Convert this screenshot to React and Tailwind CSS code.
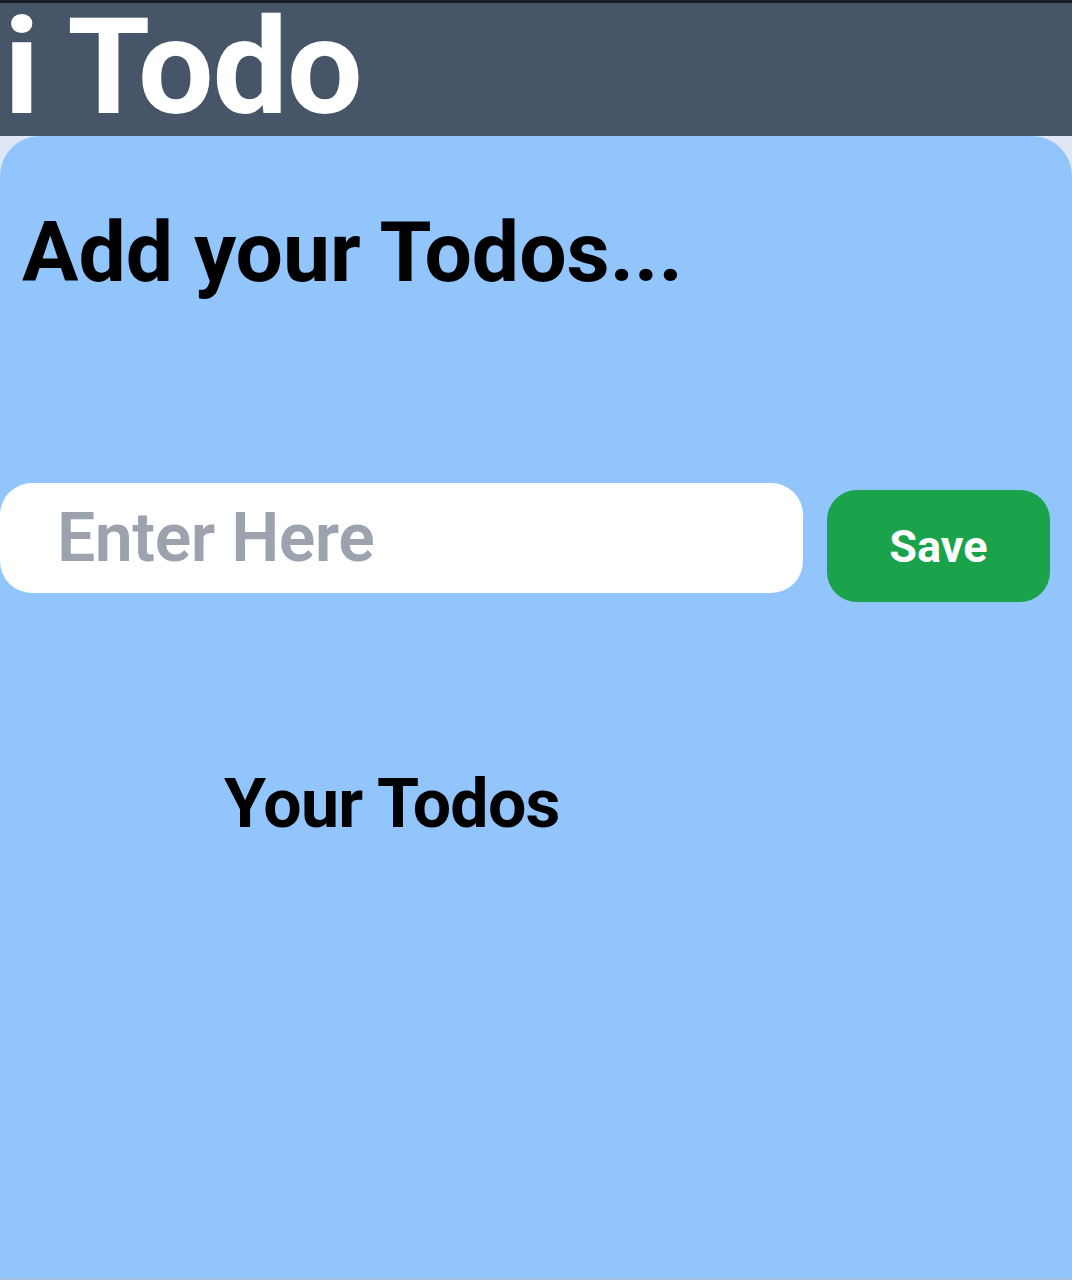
export default function App() {
  return (
    <div
      className="min-h-[1280px] w-[1072px] bg-[#dfe7f7] flex flex-col"
      style={{ fontFamily: "Roboto, 'Liberation Sans', sans-serif" }}
    >
      <nav className="h-[136px] bg-[#475569] border-t-[3px] border-[#1c1f26] flex items-start">
        <div className="text-white font-bold text-[134px] leading-[130px] pl-[4px] tracking-[-1px] whitespace-nowrap">
          i Todo
        </div>
      </nav>
      <main className="flex-1 bg-[#93c5fd] rounded-t-[40px] border-b-[2px] border-[#a3bfdc]">
        <h1 className="text-black font-bold text-[84px] leading-none pl-[22px] pt-[75px]">
          Add your Todos...
        </h1>
        <div className="flex items-start mt-[188px] pr-[22px]">
          <input
            className="w-[803px] h-[110px] bg-white rounded-[32px] pl-[57px] text-[68px] font-semibold text-black placeholder:text-[#9ca3af] outline-none tracking-[-0.5px]"
            placeholder="Enter Here"
          />
          <button className="ml-[24px] mt-[7px] w-[223px] h-[112px] bg-[#1aa34a] rounded-[30px] text-white font-bold text-[45px] leading-none">
            Save
          </button>
        </div>
        <h2 className="text-black font-bold text-[68px] leading-none pl-[224px] mt-[168px] tracking-[-0.7px]">
          Your Todos
        </h2>
      </main>
    </div>
  );
}
